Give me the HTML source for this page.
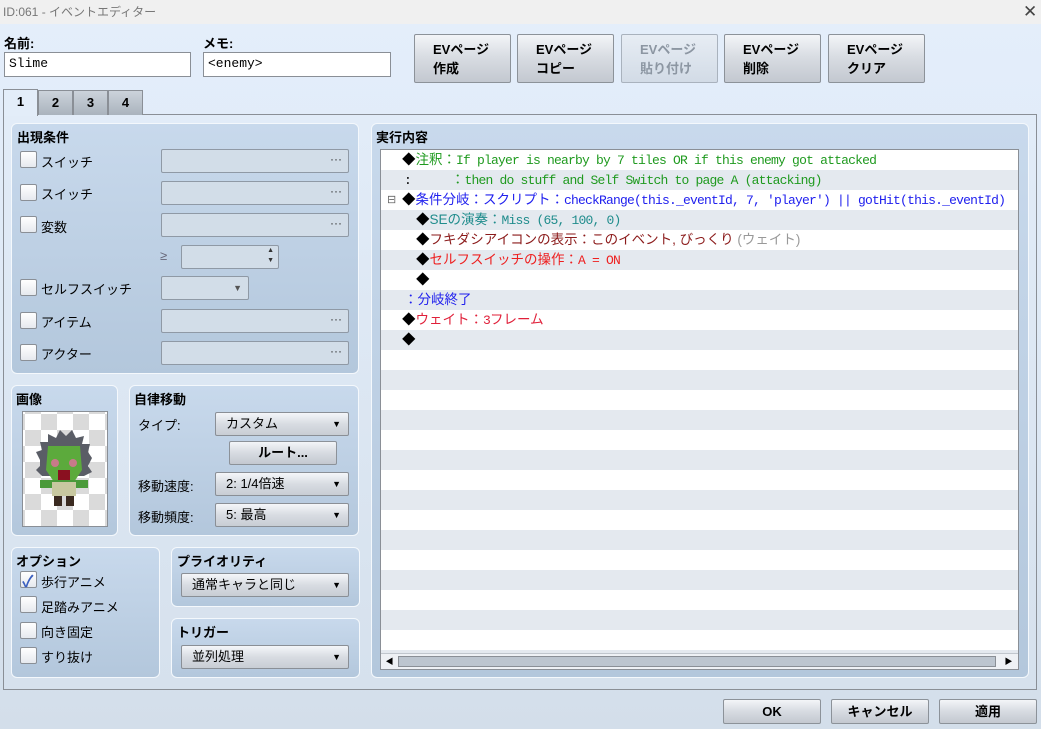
<!DOCTYPE html>
<html><head><meta charset="utf-8"><style>
*{box-sizing:border-box;margin:0;padding:0}
body{width:1041px;height:729px;overflow:hidden;position:relative;font-family:"Liberation Sans","Noto Sans CJK JP",sans-serif;font-size:13px;color:#000;background:linear-gradient(#e4eefb,#dde8f4 60%,#d3deea)}
.a{position:absolute}
.title{left:0;top:0;width:1041px;height:24px;background:#f0f0f0;color:#777;font-size:12px;line-height:24px;padding-left:3px}
.lbl{font-weight:bold;font-size:13px}
.inp{background:#fff;border:1px solid #8a8f96;font-family:"Liberation Mono","Noto Sans CJK JP",monospace;font-size:13px;line-height:22px;padding-left:4px}
.btn{border:1px solid #8c9299;border-radius:2px;background:linear-gradient(#f3f5f8,#d9dde3 45%,#c3c8d0);font-weight:bold;font-size:13px}
.evb{top:34px;width:97px;height:49px;padding:5px 0 0 18px;line-height:19px}
.dis{color:#8c96a2;background:linear-gradient(#e7edf4,#d2dbe6);border-color:#a9b2bd}
.tab{top:90px;height:25px;border:1px solid #8a8f96;border-bottom:none;background:linear-gradient(#ccd3db,#aab3bd);font-weight:bold;text-align:center;line-height:24px}
.panel{border:1px solid #f4f8fc;border-radius:6px;background:linear-gradient(#c8d9ec,#b3c7dc)}
.ph{font-weight:bold;font-size:13px}
.cb{width:17px;height:17px;border:1px solid #8a8f96;border-radius:2px;background:linear-gradient(#fff,#e6e9ee)}
.fld{border:1px solid #8f99a5;border-radius:2px;background:#d2dde8;height:24px;text-align:right;padding-right:6px;line-height:18px;font-size:12px;color:#333}
.combo{border:1px solid #8a8f96;border-radius:2px;background:linear-gradient(#f4f6f9,#d8dce2 50%,#c8cdd4);height:24px;line-height:22px;padding-left:10px;font-size:13px}
.combo:after{content:"▼";position:absolute;right:7px;top:0;font-size:9px}
.row{left:1px;width:636px;height:20px;line-height:20px;white-space:nowrap;font-family:"Liberation Mono","Noto Sans CJK JP",monospace;font-size:13px;letter-spacing:-0.8px}
.j{font-family:"Liberation Sans","Noto Sans CJK JP",sans-serif;font-size:13.5px;letter-spacing:0}
</style></head><body>
<div class="a title">ID:061 - イベントエディター</div>
<div class="a" style="left:1023px;top:2px;font-size:17px;color:#444">✕</div>

<div class="a lbl" style="left:4px;top:33px">名前:</div>
<div class="a inp" style="left:4px;top:52px;width:187px;height:25px">Slime</div>
<div class="a lbl" style="left:203px;top:33px">メモ:</div>
<div class="a inp" style="left:203px;top:52px;width:188px;height:25px">&lt;enemy&gt;</div>

<div class="a btn evb" style="left:414px">EVページ<br>作成</div>
<div class="a btn evb" style="left:517px">EVページ<br>コピー</div>
<div class="a btn evb dis" style="left:621px">EVページ<br>貼り付け</div>
<div class="a btn evb" style="left:724px">EVページ<br>削除</div>
<div class="a btn evb" style="left:828px">EVページ<br>クリア</div>

<div class="a" style="left:3px;top:114px;width:1034px;height:576px;border:1px solid #8a8f96;background:linear-gradient(#e2ecf8,#d6e1ed)"></div>
<div class="a tab" style="left:3px;top:89px;width:35px;height:27px;background:#e3edf9">1</div>
<div class="a tab" style="left:38px;width:35px">2</div>
<div class="a tab" style="left:73px;width:35px">3</div>
<div class="a tab" style="left:108px;width:35px">4</div>

<div class="a panel" style="left:11px;top:123px;width:348px;height:251px"></div>
<div class="a ph" style="left:17px;top:127px">出現条件</div>
<div class="a cb" style="left:20px;top:151px"></div><div class="a" style="left:41px;top:152px">スイッチ</div><div class="a fld" style="left:161px;top:149px;width:188px">···</div>
<div class="a cb" style="left:20px;top:184px"></div><div class="a" style="left:41px;top:184px">スイッチ</div><div class="a fld" style="left:161px;top:181px;width:188px">···</div>
<div class="a cb" style="left:20px;top:216px"></div><div class="a" style="left:41px;top:217px">変数</div><div class="a fld" style="left:161px;top:213px;width:188px">···</div>
<div class="a" style="left:160px;top:248px;color:#667">≥</div>
<div class="a fld" style="left:181px;top:245px;width:98px;font-size:7px;line-height:10px;padding-right:4px">▲<br>▼</div>
<div class="a cb" style="left:20px;top:279px"></div><div class="a" style="left:41px;top:279px">セルフスイッチ</div><div class="a fld" style="left:161px;top:276px;width:88px;font-size:9px;line-height:22px;padding-right:6px;color:#555">▼</div>
<div class="a cb" style="left:20px;top:312px"></div><div class="a" style="left:41px;top:312px">アイテム</div><div class="a fld" style="left:161px;top:309px;width:188px">···</div>
<div class="a cb" style="left:20px;top:344px"></div><div class="a" style="left:41px;top:344px">アクター</div><div class="a fld" style="left:161px;top:341px;width:188px">···</div>

<div class="a panel" style="left:11px;top:385px;width:107px;height:151px"></div>
<div class="a ph" style="left:16px;top:389px">画像</div>
<div class="a" style="left:22px;top:411px;width:86px;height:116px;border:1px solid #8a8f96;background-color:#fff;background-image:linear-gradient(45deg,#dadada 25%,transparent 25%,transparent 75%,#dadada 75%),linear-gradient(45deg,#dadada 25%,transparent 25%,transparent 75%,#dadada 75%);background-size:32px 32px;background-position:2px 2px,18px 18px"></div>
<svg class="a" style="left:34px;top:430px" width="60" height="80" viewBox="0 0 60 80">
<path d="M6 30 L2 22 L8 20 L6 12 L14 12 L14 4 L22 8 L26 0 L32 6 L38 0 L42 8 L50 6 L48 14 L56 14 L54 22 L58 28 L54 36 L58 42 L50 46 L8 46 L2 40 L6 36 Z" fill="#5a5d66"/>
<path d="M14 16 L46 16 L48 40 L40 52 L20 52 L12 40 Z" fill="#5caa3c"/>
<circle cx="21" cy="33" r="4" fill="#c87a8a"/><circle cx="39" cy="33" r="4" fill="#c87a8a"/>
<rect x="24" y="40" width="12" height="10" fill="#8a1020"/>
<rect x="6" y="50" width="48" height="8" fill="#4a9a3a"/>
<rect x="18" y="52" width="24" height="14" fill="#c8c8a0"/>
<rect x="20" y="66" width="8" height="10" fill="#3a2a20"/><rect x="32" y="66" width="8" height="10" fill="#3a2a20"/>
</svg>

<div class="a panel" style="left:129px;top:385px;width:230px;height:151px"></div>
<div class="a ph" style="left:134px;top:389px">自律移動</div>
<div class="a" style="left:138px;top:415px">タイプ:</div>
<div class="a combo" style="left:215px;top:412px;width:134px">カスタム</div>
<div class="a btn" style="left:229px;top:441px;width:108px;height:24px;text-align:center;line-height:22px">ルート...</div>
<div class="a" style="left:138px;top:476px">移動速度:</div>
<div class="a combo" style="left:215px;top:472px;width:134px">2: 1/4倍速</div>
<div class="a" style="left:138px;top:507px">移動頻度:</div>
<div class="a combo" style="left:215px;top:503px;width:134px">5: 最高</div>

<div class="a panel" style="left:11px;top:547px;width:149px;height:131px"></div>
<div class="a ph" style="left:16px;top:551px">オプション</div>
<div class="a cb" style="left:20px;top:571px"></div><div class="a" style="left:22px;top:568px;color:#3a5fbf;font-size:16px;font-weight:bold">✓</div><div class="a" style="left:41px;top:572px">歩行アニメ</div>
<div class="a cb" style="left:20px;top:596px"></div><div class="a" style="left:41px;top:597px">足踏みアニメ</div>
<div class="a cb" style="left:20px;top:622px"></div><div class="a" style="left:41px;top:622px">向き固定</div>
<div class="a cb" style="left:20px;top:647px"></div><div class="a" style="left:41px;top:647px">すり抜け</div>

<div class="a panel" style="left:171px;top:547px;width:189px;height:60px"></div>
<div class="a ph" style="left:177px;top:551px">プライオリティ</div>
<div class="a combo" style="left:181px;top:573px;width:168px">通常キャラと同じ</div>
<div class="a panel" style="left:171px;top:618px;width:189px;height:60px"></div>
<div class="a ph" style="left:177px;top:622px">トリガー</div>
<div class="a combo" style="left:181px;top:645px;width:168px">並列処理</div>

<div class="a panel" style="left:371px;top:123px;width:658px;height:555px"></div>
<div class="a ph" style="left:376px;top:127px">実行内容</div>
<div class="a" style="left:380px;top:149px;width:639px;height:521px;border:1px solid #8a8f96;background:repeating-linear-gradient(#fff 0 20px,#e4e9ef 20px 40px)">
<div class="a row" style="top:0;padding-left:20px;color:#1f9a1f"><span class="j" style="color:#000">◆</span><span class="j">注釈：</span>If player is nearby by 7 tiles OR if this enemy got attacked</div>
<div class="a row" style="top:20px;padding-left:22px;color:#1f9a1f"><span style="color:#000">:</span><span class="j" style="margin-left:40px">：</span>then do stuff and Self Switch to page A (attacking)</div>
<div class="a row" style="top:40px;padding-left:20px;color:#2020ee"><span class="a j" style="left:5px;top:0;color:#666;font-size:11px">⊟</span><span class="j" style="color:#000">◆</span><span class="j">条件分岐：スクリプト：</span>checkRange(this._eventId, 7, 'player') || gotHit(this._eventId)</div>
<div class="a row" style="top:60px;padding-left:34px;color:#1f8c8c"><span class="j" style="color:#000">◆</span><span class="j">SEの演奏：</span>Miss (65, 100, 0)</div>
<div class="a row" style="top:80px;padding-left:34px;color:#8b1a1a"><span class="j" style="color:#000">◆</span><span class="j">フキダシアイコンの表示：このイベント, びっくり <span style="color:#999">(ウェイト)</span></span></div>
<div class="a row" style="top:100px;padding-left:34px;color:#ee2020"><span class="j" style="color:#000">◆</span><span class="j">セルフスイッチの操作：</span>A = ON</div>
<div class="a row" style="top:120px;padding-left:34px"><span class="j">◆</span></div>
<div class="a row" style="top:140px;padding-left:22px;color:#2020ee"><span class="j">：分岐終了</span></div>
<div class="a row" style="top:160px;padding-left:20px;color:#e0203a"><span class="j" style="color:#000">◆</span><span class="j">ウェイト：</span>3<span class="j">フレーム</span></div>
<div class="a row" style="top:180px;padding-left:20px"><span class="j">◆</span></div>
<div class="a" style="left:0;top:503px;width:637px;height:16px;background:#eef1f5;border-top:1px solid #c0c6cd">
<div class="a" style="left:1px;top:0;width:15px;height:15px;font-size:8px;line-height:15px;text-align:center">◀</div>
<div class="a" style="left:17px;top:2px;width:598px;height:11px;border:1px solid #8a8f96;background:#bcc5cf"></div>
<div class="a" style="left:620px;top:0;width:15px;height:15px;font-size:8px;line-height:15px;text-align:center">▶</div>
</div>
</div>

<div class="a btn" style="left:723px;top:699px;width:98px;height:25px;text-align:center;line-height:23px">OK</div>
<div class="a btn" style="left:831px;top:699px;width:98px;height:25px;text-align:center;line-height:23px">キャンセル</div>
<div class="a btn" style="left:939px;top:699px;width:98px;height:25px;text-align:center;line-height:23px">適用</div>
</body></html>
